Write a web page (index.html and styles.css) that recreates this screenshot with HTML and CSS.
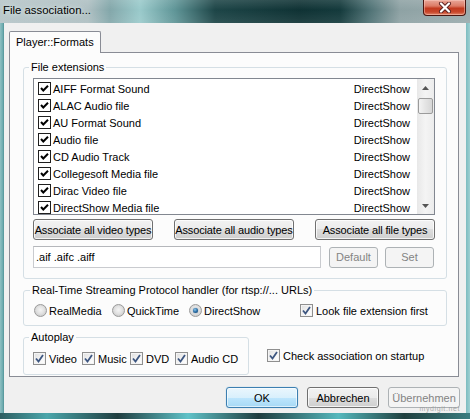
FILE: index.html
```html
<!DOCTYPE html>
<html>
<head>
<meta charset="utf-8">
<title>File association...</title>
<link rel="stylesheet" href="styles.css">
</head>
<body>
<div class="window">
  <div class="titlebar">
    <span class="title">File association...</span>
    <div class="close">
      <svg width="14" height="11" viewBox="0 0 14 11"><path d="M3 1.5 L11 9.5 M11 1.5 L3 9.5" stroke="#5a2020" stroke-width="4" stroke-linecap="round"/><path d="M3 1.5 L11 9.5 M11 1.5 L3 9.5" stroke="#fff" stroke-width="2.2" stroke-linecap="round"/></svg>
    </div>
  </div>
  <div class="client">
    <div class="tabs"><div class="tab">Player::Formats</div></div>
    <div class="pane">
      <fieldset class="group g-ext">
        <legend>File extensions</legend>
        <div class="list">
          <div class="rows">
            <div class="row"><span class="ccb"><svg width="11" height="11" viewBox="0 0 11 11"><polyline points="2,5 4.3,7.5 9,2.8" fill="none" stroke="#000" stroke-width="2"/></svg></span><span class="name">AIFF Format Sound</span><span class="handler">DirectShow</span></div>
            <div class="row"><span class="ccb"><svg width="11" height="11" viewBox="0 0 11 11"><polyline points="2,5 4.3,7.5 9,2.8" fill="none" stroke="#000" stroke-width="2"/></svg></span><span class="name">ALAC Audio file</span><span class="handler">DirectShow</span></div>
            <div class="row"><span class="ccb"><svg width="11" height="11" viewBox="0 0 11 11"><polyline points="2,5 4.3,7.5 9,2.8" fill="none" stroke="#000" stroke-width="2"/></svg></span><span class="name">AU Format Sound</span><span class="handler">DirectShow</span></div>
            <div class="row"><span class="ccb"><svg width="11" height="11" viewBox="0 0 11 11"><polyline points="2,5 4.3,7.5 9,2.8" fill="none" stroke="#000" stroke-width="2"/></svg></span><span class="name">Audio file</span><span class="handler">DirectShow</span></div>
            <div class="row"><span class="ccb"><svg width="11" height="11" viewBox="0 0 11 11"><polyline points="2,5 4.3,7.5 9,2.8" fill="none" stroke="#000" stroke-width="2"/></svg></span><span class="name">CD Audio Track</span><span class="handler">DirectShow</span></div>
            <div class="row"><span class="ccb"><svg width="11" height="11" viewBox="0 0 11 11"><polyline points="2,5 4.3,7.5 9,2.8" fill="none" stroke="#000" stroke-width="2"/></svg></span><span class="name">Collegesoft Media file</span><span class="handler">DirectShow</span></div>
            <div class="row"><span class="ccb"><svg width="11" height="11" viewBox="0 0 11 11"><polyline points="2,5 4.3,7.5 9,2.8" fill="none" stroke="#000" stroke-width="2"/></svg></span><span class="name">Dirac Video file</span><span class="handler">DirectShow</span></div>
            <div class="row"><span class="ccb"><svg width="11" height="11" viewBox="0 0 11 11"><polyline points="2,5 4.3,7.5 9,2.8" fill="none" stroke="#000" stroke-width="2"/></svg></span><span class="name">DirectShow Media file</span><span class="handler">DirectShow</span></div>
          </div>
          <div class="scrollbar">
            <div class="sb-btn"><svg width="7" height="4" viewBox="0 0 7 4"><polygon points="0,4 3.5,0 7,4" fill="#555"/></svg></div>
            <div class="sb-track"><div class="sb-thumb"></div></div>
            <div class="sb-btn"><svg width="7" height="4" viewBox="0 0 7 4"><polygon points="0,0 7,0 3.5,4" fill="#555"/></svg></div>
          </div>
        </div>
        <div class="btnrow">
          <div class="btn wide">Associate all video types</div>
          <div class="btn wide">Associate all audio types</div>
          <div class="btn wide">Associate all file types</div>
        </div>
        <div class="extrow">
          <div class="field">.aif .aifc .aiff</div>
          <div class="btn small disabled">Default</div>
          <div class="btn small disabled">Set</div>
        </div>
      </fieldset>

      <fieldset class="group g-rtsp">
        <legend>Real-Time Streaming Protocol handler (for rtsp://... URLs)</legend>
        <div class="optrow">
          <label class="opt w-real"><span class="radio"></span>RealMedia</label>
          <label class="opt w-quick"><span class="radio"></span>QuickTime</label>
          <label class="opt w-direct"><span class="radio on"></span>DirectShow</label>
          <label class="opt"><span class="vcb"><svg width="11" height="11" viewBox="0 0 11 11"><polyline points="2,5.5 4.5,8.5 9,2" fill="none" stroke="#3d5680" stroke-width="1.8"/></svg></span>Look file extension first</label>
        </div>
      </fieldset>

      <div class="lastrow">
        <fieldset class="group g-auto">
          <legend>Autoplay</legend>
          <div class="optrow">
            <label class="opt w-video"><span class="vcb"><svg width="11" height="11" viewBox="0 0 11 11"><polyline points="2,5.5 4.5,8.5 9,2" fill="none" stroke="#3d5680" stroke-width="1.8"/></svg></span>Video</label>
            <label class="opt w-music"><span class="vcb"><svg width="11" height="11" viewBox="0 0 11 11"><polyline points="2,5.5 4.5,8.5 9,2" fill="none" stroke="#3d5680" stroke-width="1.8"/></svg></span>Music</label>
            <label class="opt w-dvd"><span class="vcb"><svg width="11" height="11" viewBox="0 0 11 11"><polyline points="2,5.5 4.5,8.5 9,2" fill="none" stroke="#3d5680" stroke-width="1.8"/></svg></span>DVD</label>
            <label class="opt"><span class="vcb"><svg width="11" height="11" viewBox="0 0 11 11"><polyline points="2,5.5 4.5,8.5 9,2" fill="none" stroke="#3d5680" stroke-width="1.8"/></svg></span>Audio CD</label>
          </div>
        </fieldset>
        <label class="opt startup"><span class="vcb"><svg width="11" height="11" viewBox="0 0 11 11"><polyline points="2,5.5 4.5,8.5 9,2" fill="none" stroke="#3d5680" stroke-width="1.8"/></svg></span>Check association on startup</label>
      </div>
    </div>
    <div class="footer">
      <div class="btn dlg default">OK</div>
      <div class="btn dlg">Abbrechen</div>
      <div class="btn dlg disabled">Übernehmen</div>
    </div>
    <span class="watermark">mydigit.net</span>
  </div>
  <div class="bottomframe"></div>
</div>
</body>
</html>
```

FILE: styles.css
```css
html, body {
  margin: 0;
  padding: 0;
}
body {
  width: 470px;
  height: 419px;
  overflow: hidden;
  font-family: "Liberation Sans", Arial, sans-serif;
  font-size: 11px;
  color: #000;
}
.window {
  width: 470px;
  height: 419px;
  display: flex;
  flex-direction: column;
  background: linear-gradient(90deg, #8fc0c3 0, #6aa9ad 3px, #4b8e92 4px, #7dbcc0 466px, #9fd0d2 470px);
}
.titlebar {
  height: 23px;
  display: flex;
  justify-content: space-between;
  align-items: flex-start;
  background:
    linear-gradient(180deg, rgba(255,255,255,0.12) 0, rgba(255,255,255,0) 10px, rgba(255,255,255,0.08) 23px),
    linear-gradient(90deg, #b6c5c8 0, #aebfc2 88px, #83a7aa 110px, #9acacb 140px, #5f9597 175px, #1d4547 215px, #0f3234 300px, #143a3c 340px, #4f7275 370px, #8ea2a4 400px, #9aabad 470px);
}
.title {
  font-size: 11.4px;
  padding: 4px 0 0 3px;
  text-shadow: 0 0 4px #dfe9ea, 0 0 8px #dfe9ea;
}
.close {
  width: 43px;
  height: 16px;
  margin-right: 4px;
  box-sizing: border-box;
  border: 1px solid #4a1610;
  border-top: none;
  border-radius: 0 0 4px 4px;
  background: linear-gradient(180deg, #e9a799 0, #dc7b66 40%, #c23a1f 55%, #c8462a 80%, #e0876b 100%);
  box-shadow: inset 0 0 0 1px rgba(255,210,200,0.45);
  display: flex;
  align-items: center;
  justify-content: center;
}
.client {
  position: relative;
  margin: 0 4px;
  height: 390px;
  background: #f0f0f0;
  display: flex;
  flex-direction: column;
}
.tabs {
  display: flex;
  margin: 8px 0 0 5px;
  height: 21px;
}
.tab {
  width: 92px;
  height: 22px;
  box-sizing: border-box;
  border: 1px solid #898c95;
  border-bottom: none;
  border-radius: 2px 2px 0 0;
  background: #fcfcfc;
  padding-left: 6px;
  line-height: 20px;
  position: relative;
  z-index: 1;
}
.pane {
  margin-left: 5px;
  width: 450px;
  height: 325px;
  box-sizing: border-box;
  border: 1px solid #898c95;
  background: #fcfcfc;
  padding: 8px 0 0 13px;
}
.group {
  margin: 0;
  box-sizing: border-box;
  border: 1px solid #d5dfe5;
  border-radius: 3px;
  min-width: 0;
}
.group legend {
  padding: 0 2px;
  margin-left: -4px;
  line-height: 13px;
  font-size: 11px;
}
.g-ext {
  width: 424px;
  padding: 4px 11px 10px 9px;
}
.list {
  height: 137px;
  box-sizing: border-box;
  border: 1px solid #828790;
  background: #fff;
  display: flex;
  overflow: hidden;
}
.rows {
  flex: 1;
  padding-top: 1px;
  overflow: hidden;
}
.row {
  height: 17px;
  display: flex;
  align-items: center;
  padding-left: 4px;
  padding-right: 7px;
}
.ccb {
  width: 13px;
  height: 13px;
  box-sizing: border-box;
  border: 1px solid #1e1e1e;
  background: #fff;
  display: flex;
  flex: none;
}
.name {
  margin-left: 2px;
  flex: 1;
}
.handler {
  text-align: right;
}
.scrollbar {
  width: 17px;
  flex: none;
  display: flex;
  flex-direction: column;
  background: linear-gradient(90deg, #e8e8e8, #f4f4f4 50%, #ececec);
}
.sb-btn {
  height: 17px;
  display: flex;
  align-items: center;
  justify-content: center;
  flex: none;
}
.sb-track {
  flex: 1;
  padding-top: 2px;
}
.sb-thumb {
  width: 15px;
  height: 16px;
  margin-left: 1px;
  box-sizing: border-box;
  border: 1px solid #9b9b9b;
  border-radius: 2px;
  background: linear-gradient(90deg, #f3f3f3, #e4e4e4 50%, #d6d6d6);
}
.btnrow {
  display: flex;
  justify-content: space-between;
  margin-top: 4px;
}
.btn {
  box-sizing: border-box;
  height: 21px;
  border: 1px solid #707070;
  border-radius: 3px;
  background: linear-gradient(180deg, #f2f2f2 0, #ebebeb 50%, #dddddd 50%, #cfcfcf 100%);
  box-shadow: inset 0 0 0 1px rgba(255,255,255,0.75);
  display: flex;
  align-items: center;
  justify-content: center;
  white-space: nowrap;
  font-size: 11px;
}
.btn.wide {
  width: 120px;
  letter-spacing: -0.15px;
}
.btn.small {
  width: 49px;
}
.btn.disabled {
  border-color: #adb2b5;
  background: #f4f4f4;
  color: #838383;
  box-shadow: none;
}
.btn.default {
  border-color: #3c7fb1;
  background: linear-gradient(180deg, #eaf6fd 0, #d9f0fc 50%, #bee6fd 50%, #a7d9f5 100%);
  box-shadow: inset 0 0 0 1px rgba(255,255,255,0.6), 0 0 1px #6fb6e0;
}
.extrow {
  display: flex;
  margin-top: 6px;
  align-items: center;
}
.field {
  width: 288px;
  height: 22px;
  box-sizing: border-box;
  border: 1px solid #c9cbcf;
  border-top-color: #b5b7bb;
  background: #fff;
  padding-left: 2px;
  line-height: 20px;
  margin-right: 8px;
}
.extrow .btn + .btn {
  margin-left: 7px;
}
.g-rtsp {
  width: 424px;
  margin-top: 5px;
  padding: 7px 4px 8px 10px;
}
.optrow {
  display: flex;
  align-items: center;
  height: 13px;
}
.opt {
  display: flex;
  align-items: center;
  white-space: nowrap;
  height: 13px;
}
.w-real { width: 78px; }
.w-quick { width: 77px; }
.w-direct { width: 111px; }
.w-video { width: 49px; }
.w-music { width: 48px; }
.w-dvd { width: 45px; }
.radio {
  width: 13px;
  height: 13px;
  box-sizing: border-box;
  border-radius: 50%;
  border: 1px solid #9a9a9a;
  background: radial-gradient(circle at 50% 45%, #f4f4f4 0, #e2e2e2 45%, #cfcfcf 75%, #e6e6e6 100%);
  margin-right: 2px;
  flex: none;
  display: flex;
  align-items: center;
  justify-content: center;
}
.radio.on::after {
  content: "";
  width: 5px;
  height: 5px;
  border-radius: 50%;
  background: radial-gradient(circle at 40% 35%, #8ec6ea 0, #2a6ea6 50%, #123a60 100%);
  box-shadow: 0 0 1px #1a4c7a;
}
.vcb {
  width: 13px;
  height: 13px;
  box-sizing: border-box;
  border: 1px solid #8f8f8f;
  background: linear-gradient(135deg, #dedede 0, #f6f6f6 60%, #ffffff 100%);
  box-shadow: inset 0 0 0 1px #f4f4f4;
  margin-right: 3px;
  flex: none;
  display: flex;
}
.lastrow {
  display: flex;
  align-items: flex-start;
  margin-top: 5px;
}
.g-auto {
  width: 226px;
  padding: 8px 4px 9px 9px;
}
.startup {
  margin: 18px 0 0 18px;
}
.footer {
  display: flex;
  justify-content: flex-end;
  gap: 9px;
  padding: 10px 6px 0 0;
}
.btn.dlg {
  width: 72px;
}
.watermark {
  position: absolute;
  right: 6px;
  bottom: 0;
  font-size: 7px;
  line-height: 8px;
  letter-spacing: 0.6px;
  color: rgba(150,150,150,0.8);
}
.bottomframe {
  flex: 1;
  background: linear-gradient(90deg, #2e5e61 0, #4aa6ab 10%, #203e40 25%, #5fc2c8 40%, #1f3d3f 55%, #55b8bd 72%, #20403f 86%, #3b7d80 100%);
}
```
